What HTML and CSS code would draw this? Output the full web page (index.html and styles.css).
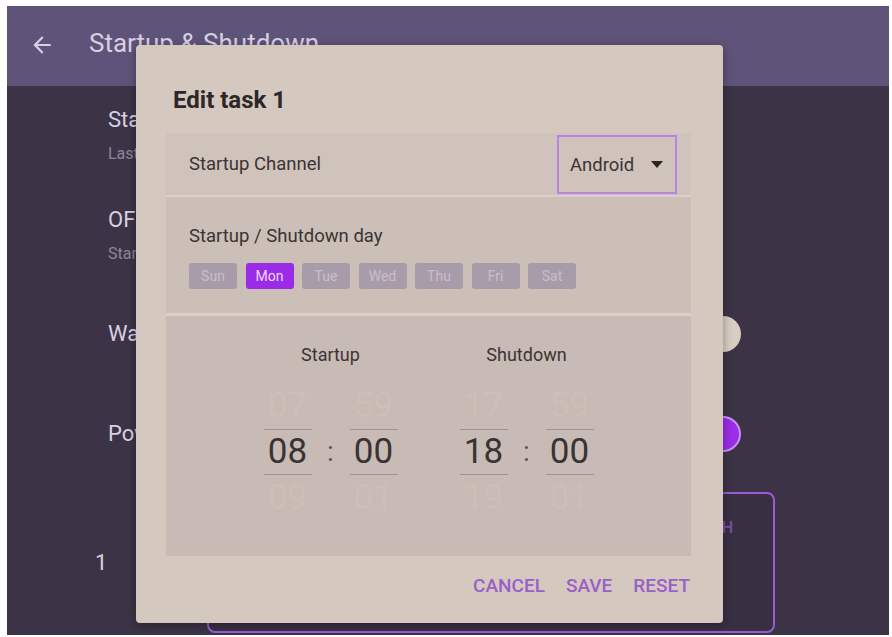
FILE: index.html
```html
<!DOCTYPE html>
<html lang="en">
<head>
<meta charset="utf-8">
<title>Startup &amp; Shutdown</title>
<link rel="stylesheet" href="styles.css">
</head>
<body>
<div class="screen">
  <header class="appbar">
    <svg class="back" viewBox="0 0 24 24" width="24" height="24"><path d="M20 11H7.83l5.59-5.59L12 4l-8 8 8 8 1.41-1.41L7.83 13H20v-2z" fill="currentColor"/></svg>
    <span class="app-title">Startup &amp; Shutdown</span>
  </header>
  <main class="list">
    <div class="item item-first">
      <div class="item-title">Startup</div>
      <div class="item-sub">Last status</div>
    </div>
    <div class="item item-second">
      <div class="item-title">OFF timer</div>
      <div class="item-sub">Standby</div>
    </div>
    <div class="row row-wake">
      <div class="item-title">Wake on LAN</div>
      <div class="switch"></div>
    </div>
    <div class="row row-power">
      <div class="item-title">Power on</div>
      <div class="switch switch-on"></div>
    </div>
    <div class="task-row">
      <div class="task-num">1</div>
      <div class="task-card"><span class="task-action">SWITCH</span></div>
    </div>
  </main>

  <div class="dialog">
    <div class="dialog-title">Edit task 1</div>
    <div class="panel">
      <div class="channel-row">
        <span class="row-label">Startup Channel</span>
        <div class="dropdown"><span>Android</span><span class="caret"></span></div>
      </div>
      <div class="days-row">
        <div class="row-label">Startup / Shutdown day</div>
        <div class="chips">
          <span class="chip">Sun</span>
          <span class="chip chip-on">Mon</span>
          <span class="chip">Tue</span>
          <span class="chip">Wed</span>
          <span class="chip">Thu</span>
          <span class="chip">Fri</span>
          <span class="chip">Sat</span>
        </div>
      </div>
      <div class="time-row">
        <div class="time-group">
          <div class="time-label">Startup</div>
          <div class="picker">
            <div class="wheel"><span class="ghost">07</span><span class="current">08</span><span class="ghost">09</span></div>
            <span class="colon">:</span>
            <div class="wheel"><span class="ghost">59</span><span class="current">00</span><span class="ghost">01</span></div>
          </div>
        </div>
        <div class="time-group">
          <div class="time-label">Shutdown</div>
          <div class="picker">
            <div class="wheel"><span class="ghost">17</span><span class="current">18</span><span class="ghost">19</span></div>
            <span class="colon">:</span>
            <div class="wheel"><span class="ghost">59</span><span class="current">00</span><span class="ghost">01</span></div>
          </div>
        </div>
      </div>
    </div>
    <div class="actions">
      <span class="btn">CANCEL</span>
      <span class="btn">SAVE</span>
      <span class="btn">RESET</span>
    </div>
  </div>
</div>
</body>
</html>
```

FILE: styles.css
```css
* { box-sizing: border-box; }

body {
  margin: 0;
  background: #ffffff;
  font-family: Roboto, "Noto Sans", "Liberation Sans", sans-serif;
}

.screen {
  position: relative;
  margin: 6px 0 0 7px;
  width: 882px;
  height: 629px;
  background: #3c3446;
  overflow: hidden;
}

.appbar {
  height: 80px;
  background: #605379;
  display: flex;
  align-items: center;
  padding-left: 22px;
  color: #d7cfe3;
}

.back {
  width: 26px;
  height: 26px;
  margin-top: -3px;
}

.app-title {
  margin-left: 34px;
  font-size: 26px;
  line-height: 30px;
  margin-top: -6px;
}

.list {
  display: flex;
  flex-direction: column;
  padding: 21px 114px 0 101px;
}

.item-title {
  font-size: 22px;
  line-height: 26px;
  color: #d9d0e2;
}

.item-sub {
  margin-top: 11px;
  font-size: 16px;
  line-height: 20px;
  color: #8f8599;
}

.item-second { margin-top: 43px; }

.row {
  height: 60px;
  display: flex;
  align-items: center;
  justify-content: space-between;
  padding-right: 34px;
}

.row-wake { margin-top: 40px; }
.row-power { margin-top: 40px; }

.switch {
  width: 36px;
  height: 36px;
  border-radius: 50%;
  background: #d8ccc3;
}

.switch-on {
  background: #9a2de6;
  border: 2px solid #c891ef;
}

.task-row {
  margin-top: 28px;
  margin-left: -13px;
  display: flex;
  align-items: center;
  height: 141px;
}

.task-num {
  width: 112px;
  font-size: 22px;
  line-height: 26px;
  color: #d9d0e2;
}

.task-card {
  flex: 1;
  align-self: stretch;
  border: 2px solid #9a5cd6;
  border-radius: 8px;
  background: #392f43;
  display: flex;
  justify-content: flex-end;
  padding: 24px 40px 0 0;
}

.task-action {
  font-size: 16px;
  line-height: 20px;
  color: #7b50a8;
  font-weight: 500;
}

/* dialog overlay */
.dialog {
  position: absolute;
  left: 129px;
  top: 39px;
  width: 587px;
  height: 578px;
  background: #d5c8bf;
  border-radius: 4px;
  box-shadow: 0 2px 10px rgba(0, 0, 0, 0.35);
  padding: 0 32px 0 30px;
  display: flex;
  flex-direction: column;
}

.dialog-title {
  margin-top: 41px;
  margin-left: 7px;
  font-size: 24px;
  line-height: 28px;
  font-weight: 700;
  color: #2d2727;
}

.panel {
  margin-top: 19px;
  display: flex;
  flex-direction: column;
  gap: 2px;
  background: #dbcfc7;
}

.row-label {
  font-size: 18.5px;
  line-height: 20px;
  color: #3b3434;
}

.channel-row {
  height: 62px;
  background: #d0c3bc;
  display: flex;
  align-items: center;
  justify-content: space-between;
  padding: 0 14px 0 23px;
}

.dropdown {
  width: 120px;
  height: 59px;
  margin-top: 1px;
  border: 2px solid #b686da;
  box-shadow: 0 0 2px #e0b4ec;
  display: flex;
  align-items: center;
  justify-content: space-between;
  padding: 0 12px 0 11px;
  font-size: 18.5px;
  color: #3b3434;
}

.caret {
  width: 0;
  height: 0;
  border-left: 6px solid transparent;
  border-right: 6px solid transparent;
  border-top: 7px solid #2a2424;
}

.days-row {
  background: #ccbfb8;
  padding: 29px 23px 24px;
}

.chips {
  margin-top: 17px;
  display: flex;
  gap: 8.5px;
}

.chip {
  width: 48px;
  height: 26px;
  border-radius: 3px;
  background: #a99caa;
  color: #c9bdca;
  font-size: 14px;
  line-height: 26px;
  text-align: center;
}

.chip-on {
  background: #9a2ce7;
  color: #f1d9f8;
}

.time-row {
  margin-top: 1px;
  height: 240px;
  background: #c8bbb5;
  display: flex;
  justify-content: center;
  gap: 62px;
  padding-top: 29px;
}

.time-group {
  width: 134px;
  display: flex;
  flex-direction: column;
  align-items: center;
}

.time-label {
  font-size: 18px;
  line-height: 20px;
  color: #3b3434;
}

.picker {
  margin-top: 18px;
  display: flex;
  align-items: center;
}

.wheel {
  width: 48px;
  display: flex;
  flex-direction: column;
  align-items: stretch;
  text-align: center;
  font-size: 35px;
}

.ghost {
  height: 46px;
  line-height: 46px;
  color: #cbbfb8;
}

.current {
  height: 46px;
  line-height: 43px;
  color: #3a3333;
  border-top: 1.5px solid #9f9391;
  border-bottom: 1.5px solid #9f9391;
}

.colon {
  width: 38px;
  text-align: center;
  font-size: 28px;
  color: #5e5453;
  margin-top: -2px;
}

.actions {
  margin-top: 18px;
  display: flex;
  justify-content: flex-end;
  gap: 21px;
  padding-right: 1px;
}

.btn {
  font-size: 19px;
  line-height: 24px;
  font-weight: 500;
  color: #9a5fc9;
}
```
